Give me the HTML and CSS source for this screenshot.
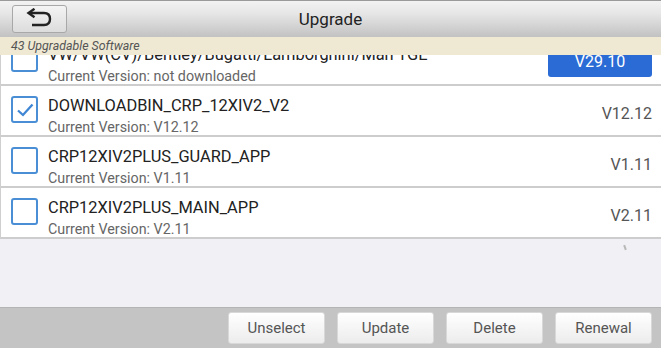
FILE: index.html
```html
<!DOCTYPE html>
<html>
<head>
<meta charset="utf-8">
<link rel="stylesheet" href="styles.css">
</head>
<body>
<div class="screen">
  <header class="topbar">
    <button class="back">
      <svg width="28" height="22" viewBox="0 0 28 22">
        <path d="M4 5 H19 C23 5 25 7.5 25 11 C25 14.5 23 17 19 17 H7" fill="none" stroke="#222" stroke-width="2.4"/>
        <path d="M9.5 0.8 L3.5 5 L9.5 9.2" fill="none" stroke="#222" stroke-width="2.4" stroke-linejoin="miter"/>
      </svg>
    </button>
    <div class="title">Upgrade</div>
  </header>
  <div class="banner">43 Upgradable Software</div>
  <div class="main">
    <div class="list">
      <div class="row first">
        <span class="box"></span>
        <div class="info">
          <div class="name">VW/VW(CV)/Bentley/Bugatti/Lamborghini/Man TGE</div>
          <div class="cur">Current Version: not downloaded</div>
        </div>
        <span class="vbtn">V29.10</span>
      </div>
      <div class="row">
        <span class="box checked">
          <svg width="22" height="22" viewBox="0 0 22 22"><path d="M4 11.5 L9 16 L18.5 5.5" fill="none" stroke="#3f86d4" stroke-width="2.3"/></svg>
        </span>
        <div class="info">
          <div class="name">DOWNLOADBIN_CRP_12XIV2_V2</div>
          <div class="cur">Current Version: V12.12</div>
        </div>
        <span class="ver">V12.12</span>
      </div>
      <div class="row">
        <span class="box"></span>
        <div class="info">
          <div class="name">CRP12XIV2PLUS_GUARD_APP</div>
          <div class="cur">Current Version: V1.11</div>
        </div>
        <span class="ver">V1.11</span>
      </div>
      <div class="row">
        <span class="box"></span>
        <div class="info">
          <div class="name">CRP12XIV2PLUS_MAIN_APP</div>
          <div class="cur">Current Version: V2.11</div>
        </div>
        <span class="ver">V2.11</span>
      </div>
    </div>
    <span class="tick"></span>
  </div>
  <footer class="toolbar">
    <button class="tbtn">Unselect</button>
    <button class="tbtn">Update</button>
    <button class="tbtn">Delete</button>
    <button class="tbtn">Renewal</button>
  </footer>
</div>
</body>
</html>
```
FILE: styles.css
```css
* { box-sizing: border-box; }
html, body { margin: 0; padding: 0; }
body {
  width: 661px;
  height: 348px;
  overflow: hidden;
  font-family: Roboto, "Noto Sans", sans-serif;
  background: #f0f0f5;
}
.screen {
  width: 661px;
  height: 348px;
  display: flex;
  flex-direction: column;
}
.topbar {
  height: 37px;
  flex: none;
  display: flex;
  align-items: center;
  padding-left: 12px;
  border-top: 1px solid #9a9a9a;
  background: linear-gradient(#f2f2f2 0%, #e6e6e6 35%, #c2c2c2 100%);
  position: relative;
}
.back {
  width: 55px;
  height: 28px;
  border: 1px solid #a8a8a8;
  border-radius: 3px;
  background: linear-gradient(#f4f4f4, #dcdcdc);
  display: flex;
  align-items: center;
  justify-content: center;
  padding: 0;
}
.back svg { display: block; margin-left: -2px; }
.title {
  position: absolute;
  left: 0;
  right: 0;
  top: 0;
  bottom: 0;
  display: flex;
  align-items: center;
  justify-content: center;
  font-size: 17px;
  color: #222;
  pointer-events: none;
}
.banner {
  flex: none;
  height: 18px;
  background: #efe9d4;
  color: #555;
  font-size: 12.4px;
  font-style: italic;
  line-height: 18px;
  padding-left: 11px;
}
.main {
  flex: 1;
  position: relative;
  overflow: hidden;
}
.list {
  margin-top: -20px;
  background: #fff;
  border-left: 1px solid #cfcfcf;
}
.row {
  height: 51px;
  display: flex;
  align-items: flex-start;
  border-bottom: 2px solid #cdcdcd;
  padding: 0 9px 0 10px;
}
.box {
  flex: none;
  width: 27px;
  height: 27px;
  margin-top: 10px;
  border: 2px solid #4a8fd6;
  border-radius: 3px;
  display: flex;
  align-items: center;
  justify-content: center;
}
.box svg { display: block; }
.info {
  flex: 1;
  min-width: 0;
  padding-left: 10px;
  padding-top: 10px;
}
.name {
  font-size: 16.4px;
  color: #222;
  line-height: 20px;
  white-space: nowrap;
}
.cur {
  font-size: 14.3px;
  color: #666;
  line-height: 20px;
  margin-top: 1px;
  white-space: nowrap;
}
.ver {
  font-size: 16px;
  line-height: 20px;
  color: #555;
  margin-top: 18px;
}
.vbtn {
  flex: none;
  width: 104px;
  height: 32px;
  margin-top: 10px;
  background: #2a6bd5;
  border-radius: 3px;
  color: #fff;
  font-size: 16px;
  display: flex;
  align-items: center;
  justify-content: center;
}
.tick {
  position: absolute;
  left: 624px;
  top: 190px;
  width: 2px;
  height: 5px;
  background: #b8b8b8;
  transform: rotate(-20deg);
}
.toolbar {
  height: 41px;
  flex: none;
  background: #c4c4c4;
  border-top: 1px solid #b4b4b4;
  display: flex;
  justify-content: flex-end;
  align-items: flex-start;
  gap: 12px;
  padding: 4px 9px 0 0;
}
.tbtn {
  width: 97px;
  height: 32px;
  border: 1px solid #d8d8d8;
  border-radius: 3px;
  background: linear-gradient(#ffffff, #ececec);
  color: #555;
  font-family: Roboto, "Noto Sans", sans-serif;
  font-size: 15px;
  padding: 0;
}
```
